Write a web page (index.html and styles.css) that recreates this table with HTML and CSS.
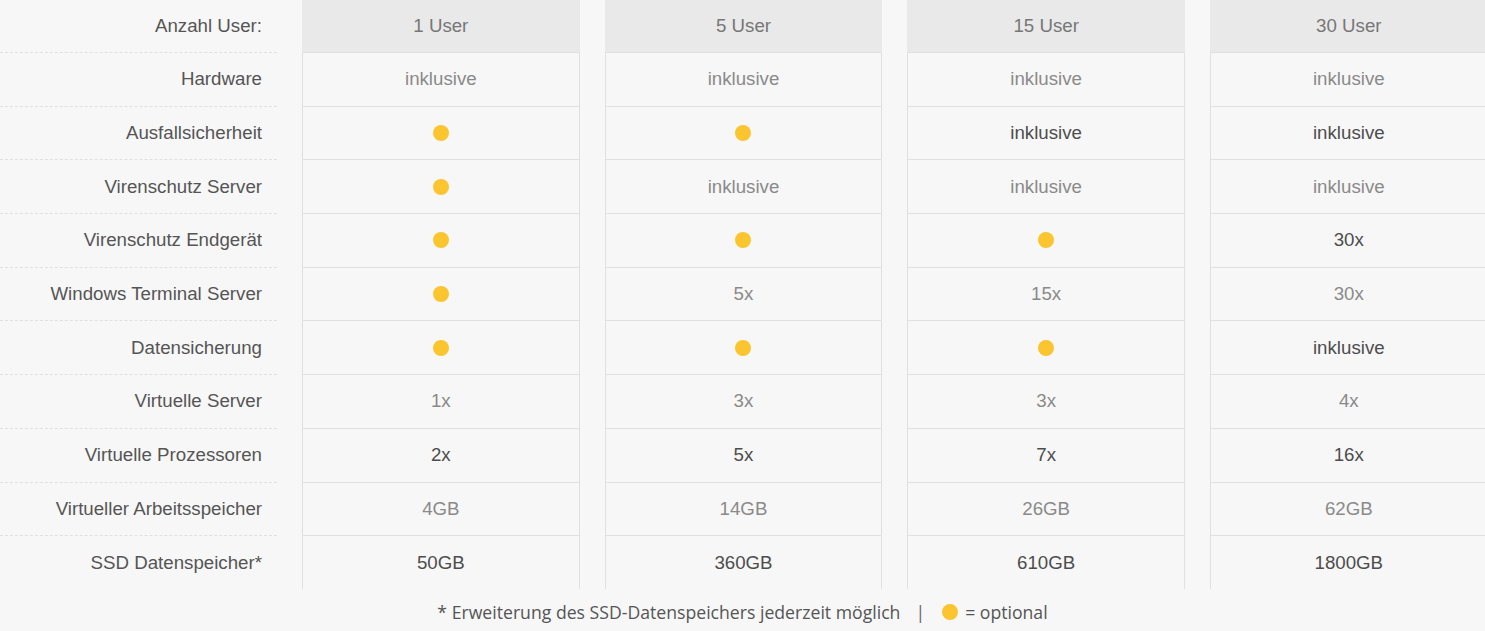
FILE: index.html
```html
<!DOCTYPE html>
<html lang="de">
<head>
<meta charset="utf-8">
<title>Preisvergleich</title>
<link rel="stylesheet" href="styles.css">
</head>
<body>
<div class="table">
  <div class="label head">Anzahl User:</div>
  <div class="hcell">1 User</div>
  <div class="hcell">5 User</div>
  <div class="hcell">15 User</div>
  <div class="hcell">30 User</div>

  <div class="label">Hardware</div>
  <div class="cell light">inklusive</div>
  <div class="cell light">inklusive</div>
  <div class="cell light">inklusive</div>
  <div class="cell light">inklusive</div>

  <div class="label">Ausfallsicherheit</div>
  <div class="cell dark"><span class="dot"></span></div>
  <div class="cell dark"><span class="dot"></span></div>
  <div class="cell dark">inklusive</div>
  <div class="cell dark">inklusive</div>

  <div class="label">Virenschutz Server</div>
  <div class="cell light"><span class="dot"></span></div>
  <div class="cell light">inklusive</div>
  <div class="cell light">inklusive</div>
  <div class="cell light">inklusive</div>

  <div class="label">Virenschutz Endgerät</div>
  <div class="cell dark"><span class="dot"></span></div>
  <div class="cell dark"><span class="dot"></span></div>
  <div class="cell dark"><span class="dot"></span></div>
  <div class="cell dark">30x</div>

  <div class="label">Windows Terminal Server</div>
  <div class="cell light"><span class="dot"></span></div>
  <div class="cell light">5x</div>
  <div class="cell light">15x</div>
  <div class="cell light">30x</div>

  <div class="label">Datensicherung</div>
  <div class="cell dark"><span class="dot"></span></div>
  <div class="cell dark"><span class="dot"></span></div>
  <div class="cell dark"><span class="dot"></span></div>
  <div class="cell dark">inklusive</div>

  <div class="label">Virtuelle Server</div>
  <div class="cell light">1x</div>
  <div class="cell light">3x</div>
  <div class="cell light">3x</div>
  <div class="cell light">4x</div>

  <div class="label">Virtuelle Prozessoren</div>
  <div class="cell dark">2x</div>
  <div class="cell dark">5x</div>
  <div class="cell dark">7x</div>
  <div class="cell dark">16x</div>

  <div class="label">Virtueller Arbeitsspeicher</div>
  <div class="cell light">4GB</div>
  <div class="cell light">14GB</div>
  <div class="cell light">26GB</div>
  <div class="cell light">62GB</div>

  <div class="label">SSD Datenspeicher*</div>
  <div class="cell dark">50GB</div>
  <div class="cell dark">360GB</div>
  <div class="cell dark">610GB</div>
  <div class="cell dark">1800GB</div>
</div>
<p class="note"><span>* Erweiterung des SSD-Datenspeichers jederzeit möglich</span><span class="sep">|</span><span class="dot small"></span><span>= optional</span></p>
</body>
</html>
```

FILE: styles.css
```css
html, body {
  margin: 0;
  padding: 0;
  background: #f7f7f7;
  overflow: hidden;
}

body {
  width: 1485px;
  height: 631px;
  font-family: "Liberation Sans", Arial, sans-serif;
}

.table {
  display: grid;
  grid-template-columns: 277px repeat(4, 277.67px);
  grid-template-rows: 52px repeat(10, 53.7px);
  column-gap: 25px;
  width: 1510px;
  font-size: 18.7px;
}

.label {
  display: flex;
  align-items: center;
  justify-content: flex-end;
  padding-right: 15px;
  color: #555;
  border-top: 1px dashed #e0e0e0;
  box-sizing: border-box;
}

.label.head {
  border-top: none;
}

.hcell {
  display: flex;
  align-items: center;
  justify-content: center;
  background: #e9e9e9;
  color: #777;
}

.cell {
  display: flex;
  align-items: center;
  justify-content: center;
  box-sizing: border-box;
  border-top: 1px solid #e0e0e0;
  border-left: 1px solid #e0e0e0;
  border-right: 1px solid #e0e0e0;
}

.light {
  color: #8a8a8a;
}

.dark {
  color: #4d4d4d;
}

.dot {
  display: inline-block;
  width: 16px;
  height: 16px;
  border-radius: 50%;
  background: #fbc530;
}

.note {
  margin: 0;
  height: 46px;
  display: flex;
  align-items: center;
  justify-content: center;
  font-family: "Open Sans", sans-serif;
  font-size: 17.65px;
  color: #555;
}

.sep {
  margin: 0 17px 0 15px;
  color: #666;
}

.dot.small {
  margin-right: 7px;
}
```
